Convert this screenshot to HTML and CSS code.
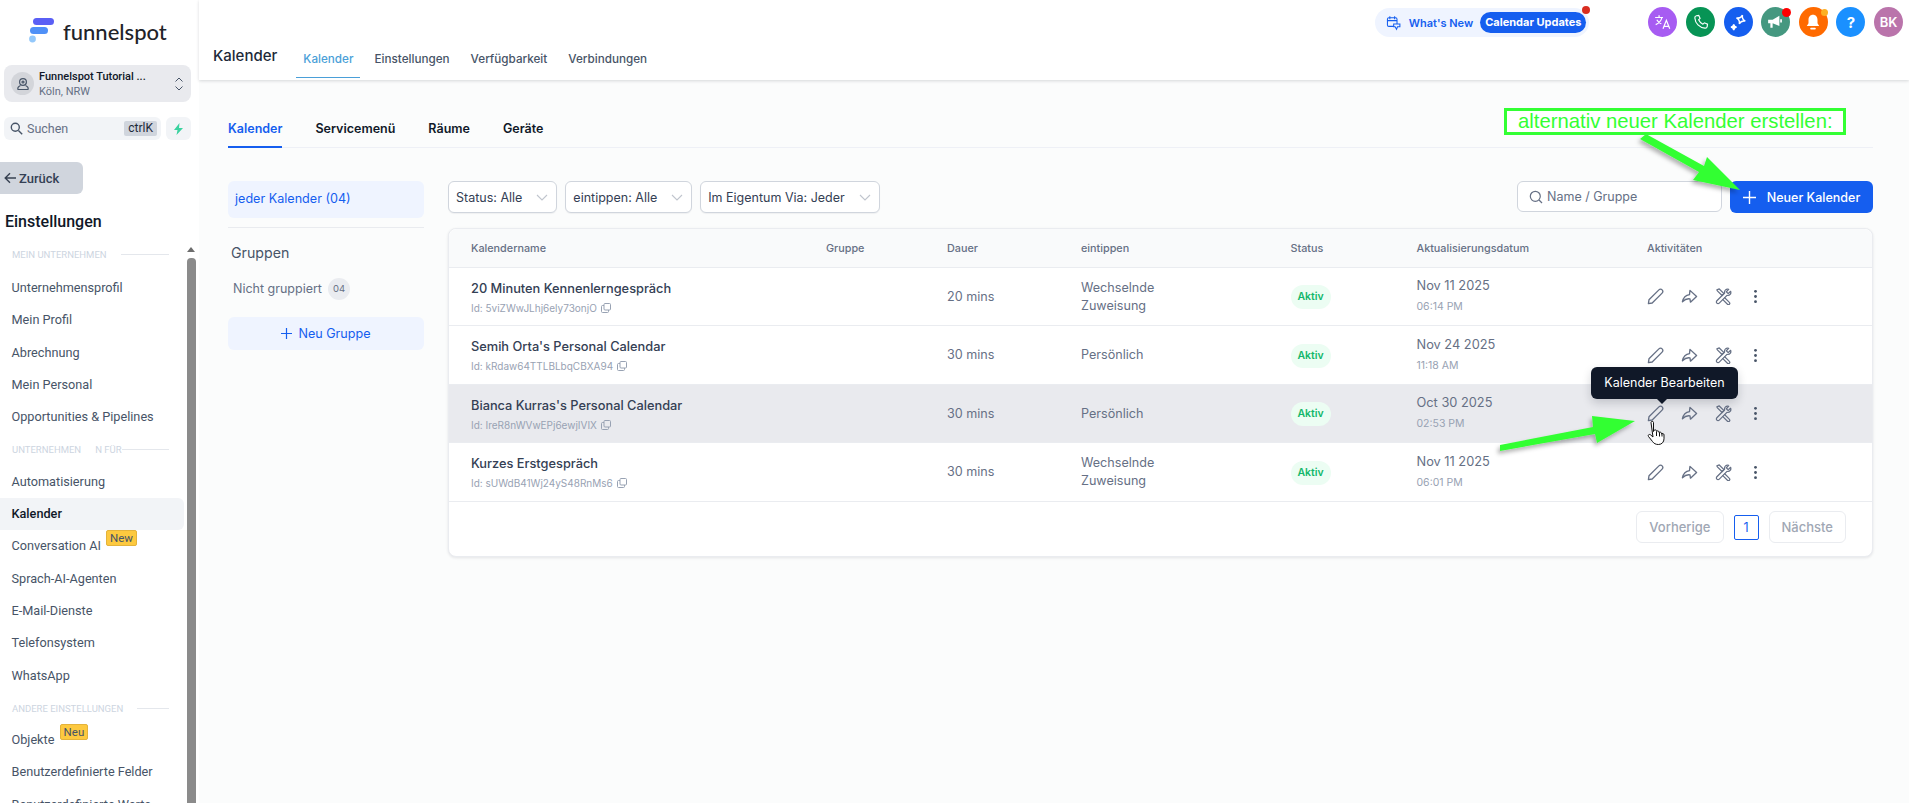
FILE: index.html
```html
<!DOCTYPE html>
<html lang="de">
<head>
<meta charset="utf-8">
<title>Kalender</title>
<link rel="stylesheet" href="styles.css">
</head>
<body>
<div class="app">
  <aside class="sidebar">
    <div class="logo">
      <svg class="logo-mark" width="28" height="26" viewBox="0 0 28 26"><rect x="4" y="0" width="21" height="7" rx="3.5" fill="#5a5ff5"/><rect x="1" y="9" width="18" height="7" rx="3.5" fill="#4f90f7"/><circle cx="3.5" cy="21" r="3.4" fill="#93c8fb"/></svg>
      <span class="logo-text">funnelspot</span>
    </div>
    <div class="loc">
      <span class="loc-ico"><svg width="14" height="14" viewBox="0 0 14 14" fill="none" stroke="#475467" stroke-width="1.2"><circle cx="7" cy="5" r="3.4"/><circle cx="7" cy="5" r="1"/><path d="M4.5 8.5 C2 9.5 1.5 11 2 12.5 H12 C12.5 11 12 9.5 9.5 8.5"/></svg></span>
      <span class="loc-txt"><b>Funnelspot Tutorial ...</b><i>Köln, NRW</i></span>
      <svg class="loc-sw" width="10" height="16" viewBox="0 0 10 16" fill="none" stroke="#475467" stroke-width="1"><path d="M1.5 5.5 5 2l3.5 3.5M1.5 10.5 5 14l3.5-3.5"/></svg>
    </div>
    <div class="searchrow">
      <div class="search">
        <svg width="13" height="13" viewBox="0 0 13 13" fill="none" stroke="#475467" stroke-width="1.4"><circle cx="5.3" cy="5.3" r="4"/><path d="m8.4 8.4 3.8 3.8"/></svg>
        <span class="search-l">Suchen</span><kbd class="kbd">ctrlK</kbd>
      </div>
      <div class="bolt"><svg width="11" height="12" viewBox="0 0 11 12"><path d="M6.5 0 1 7h3.5L3.5 12 10 5H6z" fill="#3ad29f"/></svg></div>
    </div>
    <button class="back"><svg width="13" height="12" viewBox="0 0 13 12" fill="none" stroke="#374151" stroke-width="1.4"><path d="M12 6H1.5M6 1.2 1.2 6 6 10.8"/></svg>Zurück</button>
    <h2 class="set-title">Einstellungen</h2>
    <div class="menuwrap">
      <nav class="menu">
        <div class="sec"><span>MEIN UNTERNEHMEN</span><em></em></div>
        <a class="mi">Unternehmensprofil</a>
        <a class="mi">Mein Profil</a>
        <a class="mi">Abrechnung</a>
        <a class="mi">Mein Personal</a>
        <a class="mi">Opportunities &amp; Pipelines</a>
        <div class="sec"><span>UNTERNEHMEN</span><span class="sec-f">N FÜR</span><em></em></div>
        <a class="mi">Automatisierung</a>
        <a class="mi on">Kalender</a>
        <a class="mi">Conversation AI <sup class="tag">New</sup></a>
        <a class="mi">Sprach-AI-Agenten</a>
        <a class="mi">E-Mail-Dienste</a>
        <a class="mi">Telefonsystem</a>
        <a class="mi">WhatsApp</a>
        <div class="sec"><span>ANDERE EINSTELLUNGEN</span><em></em></div>
        <a class="mi">Objekte <sup class="tag">Neu</sup></a>
        <a class="mi">Benutzerdefinierte Felder</a>
        <a class="mi">Benutzerdefinierte Werte</a>
      </nav>
      <div class="sbar"><i class="sbar-up"></i><i class="sbar-th"></i></div>
    </div>
  </aside>

  <main class="main">
    <header class="head">
      <div class="head-top">
        <div class="wn">
          <svg width="18" height="18" viewBox="0 0 16 16" fill="none" stroke="#155eef" stroke-width="1.1"><rect x="1.5" y="2.5" width="10" height="9" rx="1.5"/><path d="M1.5 5.5h10M4 1v3M9 1v3"/><path d="M8 9h6.5v3H12l-1 2.5L9.5 12H8z" fill="#eff4ff"/></svg>
          <span class="wn-t">What's New</span>
          <span class="wn-b">Calendar Updates</span>
          <i class="wn-dot"></i>
        </div>
        <div class="circles">
          <span class="cir c1"><svg width="18" height="16" viewBox="0 0 16 14" fill="none" stroke="#fff" stroke-width="1.1"><path d="M1 3h7M4.5 1v2M7 3c-.6 3-2.6 5-5.5 6.3M2.5 5c.8 1.6 2 2.8 4 3.6M8 13l3-7.5 3 7.5M9 10.8h4"/></svg></span>
          <span class="cir c2"><svg width="16" height="16" viewBox="0 0 14 14" fill="none" stroke="#fff" stroke-width="1"><path d="M3 1.5 5 1.2l1.2 2.7-1.3 1.2c.7 1.6 2 2.9 3.8 3.8L10 7.7l2.7 1.2-.3 2.1c-.2.9-1 1.5-2 1.4C5.6 12 2 8.300 1.600 3.500 1.500 2.500 2.100 1.700 3 1.500z"/></svg></span>
          <span class="cir c3"><svg width="19" height="19" viewBox="0 0 16 16" fill="none" stroke="#fff" stroke-width="1.2"><path d="M10 1.500c.3 2.300 1.700 3.700 4 4-2.300.3-3.700 1.700-4 4-.3-2.300-1.700-3.700-4-4 2.300-.3 3.700-1.700 4-4z" transform="rotate(20 10 5.500)"/><path d="M4 9.500c.2 1.300 1 2.100 2.400 2.400C5 12.100 4.200 13 4 14.400c-.2-1.400-1-2.300-2.400-2.500C3 11.600 3.800 10.800 4 9.500z" fill="#fff"/></svg></span>
          <span class="cir c4"><svg width="18" height="16" viewBox="0 0 16 14"><path d="M1 5h4l6-3.500v9L5 8v4H3V8H1z" fill="#fff"/><path d="M12.500 4.500v3" stroke="#fff" stroke-width="1.500"/></svg><i class="dot-r"></i></span>
          <span class="cir c5"><svg width="16" height="18" viewBox="0 0 14 16"><path d="M7 1.500c-2.500 0-4 2-4 4.500v3L1.500 11.500h11L11 9V6c0-2.500-1.500-4.500-4-4.500z" fill="#fff"/><rect x="4.500" y="13" width="5" height="1.600" rx=".8" fill="#fff"/></svg><i class="dot-y"></i></span>
          <span class="cir c6">?</span>
          <span class="cir c7">BK</span>
        </div>
      </div>
      <div class="head-bot">
        <h1 class="ttl">Kalender</h1>
        <nav class="tabs">
          <a class="tab act">Kalender</a><a class="tab">Einstellungen</a><a class="tab">Verfügbarkeit</a><a class="tab">Verbindungen</a>
        </nav>
      </div>
    </header>

    <div class="content">
      <nav class="stabs">
        <a class="stab act">Kalender</a><a class="stab">Servicemenü</a><a class="stab">Räume</a><a class="stab">Geräte</a>
      </nav>
      <div class="cols">
        <section class="groups">
          <div class="g-all">jeder Kalender (04)</div>
          <div class="g-sep"></div>
          <div class="g-h">Gruppen</div>
          <div class="g-item">Nicht gruppiert <span class="g-c">04</span></div>
          <button class="g-new"><svg width="11" height="11" viewBox="0 0 11 11" stroke="#155eef" stroke-width="1.2"><path d="M5.500 0v11M0 5.500h11"/></svg>Neu Gruppe</button>
        </section>
        <section class="list">
          <div class="bar">
            <div class="sel">Status: Alle<svg class="chev" width="12" height="7" viewBox="0 0 12 7" fill="none" stroke="#c0c5ce" stroke-width="1.1"><path d="m1 1 5 5 5-5"/></svg></div>
            <div class="sel">eintippen: Alle<svg class="chev" width="12" height="7" viewBox="0 0 12 7" fill="none" stroke="#c0c5ce" stroke-width="1.1"><path d="m1 1 5 5 5-5"/></svg></div>
            <div class="sel">Im Eigentum Via: Jeder<svg class="chev" width="12" height="7" viewBox="0 0 12 7" fill="none" stroke="#c0c5ce" stroke-width="1.1"><path d="m1 1 5 5 5-5"/></svg></div>
            <div class="spacer"></div>
            <div class="find"><svg width="14" height="14" viewBox="0 0 14 14" fill="none" stroke="#667085" stroke-width="1.2"><circle cx="6.300" cy="6.300" r="5"/><path d="m10 10 3 3"/></svg><span>Name / Gruppe</span></div>
            <button class="newbtn"><svg width="13" height="13" viewBox="0 0 13 13" stroke="#fff" stroke-width="1.400"><path d="M6.500 0v13M0 6.500h13"/></svg>Neuer Kalender</button>
          </div>
          <div class="card">
            <div class="row rh"><span>Kalendername</span><span>Gruppe</span><span>Dauer</span><span>eintippen</span><span>Status</span><span>Aktualisierungsdatum</span><span>Aktivitäten</span></div>

            <div class="row">
              <div><div class="nm">20 Minuten Kennenlerngespräch</div><div class="id">Id: 5viZWwJLhj6ely73onjO <svg class="cp" width="10" height="10" viewBox="0 0 10 10" fill="none" stroke="#98a2b3"><rect x="3" y=".5" width="6.500" height="6.500" rx="1"/><path d="M3 2.500H1.500a1 1 0 0 0-1 1v5a1 1 0 0 0 1 1h5a1 1 0 0 0 1-1V7"/></svg></div></div>
              <div></div><div class="tx">20 mins</div><div class="tx">Wechselnde<br>Zuweisung</div><div><span class="bdg">Aktiv</span></div>
              <div class="dt">Nov 11 2025<small>06:14 PM</small></div>
              <div class="acts"><svg class="ic"><use href="#i-pen"/></svg><svg class="ic"><use href="#i-share"/></svg><svg class="ic"><use href="#i-tool"/></svg><svg class="ic ic-d"><use href="#i-dots"/></svg></div>
            </div>
            <div class="row">
              <div><div class="nm">Semih Orta's Personal Calendar</div><div class="id">Id: kRdaw64TTLBLbqCBXA94 <svg class="cp" width="10" height="10" viewBox="0 0 10 10" fill="none" stroke="#98a2b3"><rect x="3" y=".5" width="6.500" height="6.500" rx="1"/><path d="M3 2.500H1.500a1 1 0 0 0-1 1v5a1 1 0 0 0 1 1h5a1 1 0 0 0 1-1V7"/></svg></div></div>
              <div></div><div class="tx">30 mins</div><div class="tx">Persönlich</div><div><span class="bdg">Aktiv</span></div>
              <div class="dt">Nov 24 2025<small>11:18 AM</small></div>
              <div class="acts"><svg class="ic"><use href="#i-pen"/></svg><svg class="ic"><use href="#i-share"/></svg><svg class="ic"><use href="#i-tool"/></svg><svg class="ic ic-d"><use href="#i-dots"/></svg></div>
            </div>
            <div class="row hov">
              <div><div class="nm">Bianca Kurras's Personal Calendar</div><div class="id">Id: IreR8nWVwEPj6ewjIVIX <svg class="cp" width="10" height="10" viewBox="0 0 10 10" fill="none" stroke="#98a2b3"><rect x="3" y=".5" width="6.500" height="6.500" rx="1"/><path d="M3 2.500H1.500a1 1 0 0 0-1 1v5a1 1 0 0 0 1 1h5a1 1 0 0 0 1-1V7"/></svg></div></div>
              <div></div><div class="tx">30 mins</div><div class="tx">Persönlich</div><div><span class="bdg">Aktiv</span></div>
              <div class="dt">Oct 30 2025<small>02:53 PM</small></div>
              <div class="acts"><svg class="ic"><use href="#i-pen"/></svg><svg class="ic"><use href="#i-share"/></svg><svg class="ic"><use href="#i-tool"/></svg><svg class="ic ic-d"><use href="#i-dots"/></svg>
                <div class="tip">Kalender Bearbeiten</div>
              </div>
            </div>
            <div class="row">
              <div><div class="nm">Kurzes Erstgespräch</div><div class="id">Id: sUWdB41Wj24yS48RnMs6 <svg class="cp" width="10" height="10" viewBox="0 0 10 10" fill="none" stroke="#98a2b3"><rect x="3" y=".5" width="6.500" height="6.500" rx="1"/><path d="M3 2.500H1.500a1 1 0 0 0-1 1v5a1 1 0 0 0 1 1h5a1 1 0 0 0 1-1V7"/></svg></div></div>
              <div></div><div class="tx">30 mins</div><div class="tx">Wechselnde<br>Zuweisung</div><div><span class="bdg">Aktiv</span></div>
              <div class="dt">Nov 11 2025<small>06:01 PM</small></div>
              <div class="acts"><svg class="ic"><use href="#i-pen"/></svg><svg class="ic"><use href="#i-share"/></svg><svg class="ic"><use href="#i-tool"/></svg><svg class="ic ic-d"><use href="#i-dots"/></svg></div>
            </div>
            <div class="pager">
              <button class="pg">Vorherige</button><span class="pn">1</span><button class="pg">Nächste</button>
            </div>
          </div>
        </section>
      </div>
    </div>
  </main>
</div>

<div class="note">alternativ neuer Kalender erstellen:</div>
<svg class="arrows" width="1909" height="803" viewBox="0 0 1909 803">
  <defs><filter id="sh" x="-20%" y="-20%" width="140%" height="140%"><feDropShadow dx="-2" dy="3" stdDeviation="2" flood-color="#000" flood-opacity=".3"/></filter></defs>
  <path filter="url(#sh)" fill="#33ff33" d="M1640 139 1646 134 1704 166 1707 157 1740 190 1693 180 1699 172Z"/>
  <path filter="url(#sh)" fill="#33ff33" d="M1500 445 1500 451 1595 434 1597 443 1635 421 1592 416 1593 427Z"/>
  <g stroke="#111" stroke-width="1" fill="#fff" stroke-linejoin="round"><path d="M1651 422.500c0-1.500 2.500-1.500 2.500 0v9l.6-1c.5-1 2.400-.8 2.400.5v.5c.3-1 2.500-.8 2.500.7v.5c.4-.9 2.500-.7 2.500.8v.5c.5-.8 2.500-.6 2.500.8v4c0 3-2 5.700-5.500 5.700-3 0-4.500-1-6-3l-4-5c-1-1.300.7-2.700 2-1.700l2.500 2.200z"/><path d="M1656.500 432v4M1659.500 432.500v4M1662 433v3.500" fill="none"/></g>
  <symbol id="i-pen" viewBox="0 0 18 18"><path fill="none" stroke="#667085" stroke-width="1.400" stroke-linejoin="round" d="M1.500 16.500l.6-4L12.600 2c1-1 2.500-1 3.400 0s1 2.400 0 3.400L5.500 15.900z"/></symbol>
  <symbol id="i-share" viewBox="0 0 18 18"><path fill="none" stroke="#667085" stroke-width="1.400" stroke-linejoin="round" d="M9.500 2.500 16.500 9 10 15 9.500 11.500C6.500 11 4 12 1.500 14.500 2.500 10 5.500 7.500 9 7z"/></symbol>
  <symbol id="i-tool" viewBox="0 0 18 18"><g fill="none" stroke="#667085" stroke-width="1.300" stroke-linejoin="round"><path d="M2 2 4.500 1l5 5-2 2-5-5zM10 10l5.200 5.200a1.400 1.400 0 0 1-2 2L8 12"/><path d="M16.500 3.500 14 6l-2-2 2.500-2.500c-2.500-1-5 1-4.300 3.800L2 13.500a1.700 1.700 0 0 0 2.500 2.500l8.200-8.200c2.800.7 4.800-1.800 3.800-4.300z"/></g></symbol>
  <symbol id="i-dots" viewBox="0 0 18 18"><g fill="#475467"><circle cx="9" cy="3.500" r="1.500"/><circle cx="9" cy="9" r="1.500"/><circle cx="9" cy="14.500" r="1.500"/></g></symbol>
</svg>
</body>
</html>
```

FILE: styles.css
```css
* { box-sizing: border-box; }
html, body { margin: 0; height: 803px; overflow: hidden; background: #fff; }
body { font-family: Inter, "Noto Sans", sans-serif; color: #344054; position: relative; }
button { font-family: inherit; cursor: pointer; }
.app { display: flex; height: 803px; }

/* sidebar */
.sidebar { width: 199px; flex: none; display: flex; flex-direction: column; background: #fff; font-family: Roboto, sans-serif; overflow: hidden; }
.logo { display: flex; align-items: flex-start; height: 65px; padding: 18px 0 0 29px; }
.logo-mark { flex: none; margin-right: 6px; }
.logo-text { font: 500 22px/1 Lato, sans-serif; color: #1f2329; margin-top: 3px; }
.loc { margin: 0 8px 0 4px; height: 37px; border-radius: 8px; background: #e9eaee; display: flex; align-items: center; padding: 0 7px; }
.loc-ico { width: 23px; height: 23px; border-radius: 50%; background: #d3d5da; display: flex; align-items: center; justify-content: center; flex: none; }
.loc-txt { flex: 1; margin-left: 5px; display: flex; flex-direction: column; font-size: 11px; line-height: 15px; }
.loc-txt b { font-weight: 500; color: #101828; }
.loc-txt i { font-style: normal; color: #667085; }
.searchrow { display: flex; gap: 5px; margin: 15px 8px 0 4px; height: 23px; }
.search { flex: 1; background: #f2f4f7; border-radius: 6px; display: flex; align-items: center; padding: 0 4px 0 6px; }
.search-l { flex: 1; font-size: 12.500px; color: #667085; margin-left: 4px; }
.kbd { font: 12px Roboto, sans-serif; background: #d0d5dd; color: #1d2939; border-radius: 2px; padding: 0 4px; height: 15px; line-height: 14px; }
.bolt { width: 25px; background: #f2f4f7; border-radius: 6px; display: flex; align-items: center; justify-content: center; }
.back { align-self: flex-start; margin-top: 22px; width: 83px; height: 32px; border: 0; border-radius: 0 6px 6px 0; background: #d0d5dd; display: flex; align-items: center; gap: 2px; padding: 0 0 0 4px; font: 500 13px Roboto, sans-serif; color: #344054; }
.set-title { margin: 18px 0 0 5px; font: 500 16px/20px Roboto, sans-serif; color: #101828; }
.menuwrap { flex: 1; display: flex; min-height: 0; margin-top: 13px; }
.menu { width: 184px; flex: none; overflow: hidden; }
.sec { height: 32.300px; padding: 0 15px 0 12px; display: flex; align-items: center; font-size: 9.500px; color: #cdd5df; white-space: nowrap; }
.sec:first-child { margin-top: -3px; height: 24px; margin-bottom: 6px; }
.sec em { flex: 1; height: 1px; background: #e4e7ec; margin-left: 14px; }
.sec-f { margin-left: 14px; }
.sec-f + em { margin-left: 0; }
.mi { display: block; height: 32.300px; line-height: 32.300px; padding-left: 11.500px; font-size: 12.700px; color: #475467; white-space: nowrap; }
.mi.on { background: #f2f4f7; color: #101828; font-weight: 500; border-radius: 0 6px 6px 0; }
.tag { display: inline-block; vertical-align: 8px; font-size: 11.500px; line-height: 14px; height: 16px; padding: 0 3px; background: #fdc93f; border: 1px solid #e4b33b; border-radius: 2px; color: #475467; margin-left: 2px; }
.sbar { width: 15px; flex: none; margin-left: 2px; position: relative; padding-top: 2px; display: flex; flex-direction: column; align-items: center; }
.sbar-up { width: 0; height: 0; border-left: 4.500px solid transparent; border-right: 4.500px solid transparent; border-bottom: 5px solid #6d6d6d; margin: 0 5px 0 0; }
.sbar-th { display: block; width: 9px; flex: 1; background: #8b8b8b; border-radius: 4px 4px 0 0; margin: 6px 5px 0 0; }

/* main */
.main { flex: 1; min-width: 0; background: #fbfcfc; display: flex; flex-direction: column; }
.head { height: 80px; background: #fff; box-shadow: 0 1px 3px rgba(16,24,40,.16); display: flex; flex-direction: column; }
.head-top { height: 41px; display: flex; align-items: flex-start; justify-content: flex-end; padding: 7px 0 0 0; }
.wn { position: relative; display: flex; align-items: center; height: 29px; width: 214px; margin-top: 1px; background: #eff4ff; border-radius: 15px; padding: 0 3px 0 11px; }
.wn-t { font-size: 11px; font-weight: 600; color: #155eef; margin: 0 7px 0 7px; white-space: nowrap; }
.wn-b { height: 21px; line-height: 21px; font-size: 11px; font-weight: 700; color: #fff; background: #155eef; border-radius: 11px; padding: 0 5px; white-space: nowrap; flex: 1; text-align: center; }
.wn-dot { position: absolute; right: -1px; top: -2px; width: 8px; height: 8px; background: #d92d20; border-radius: 50%; }
.circles { display: flex; gap: 8.600px; margin-left: 59px; padding-right: 6px; }
.cir { position: relative; width: 29px; height: 30px; border-radius: 50%; display: flex; align-items: center; justify-content: center; color: #fff; font-weight: 700; font-size: 13px; }
.c1 { background: #a75cf2; } .c2 { background: #079455; } .c3 { background: #155eef; }
.c4 { background: #459880; } .c5 { background: #ff6a00; } .c6 { background: #1a90ff; font-size: 15px; } .c7 { background: #ba74ab; font-weight: 600; font-size: 13px; }
.dot-r { position: absolute; right: -1px; top: 1px; width: 9px; height: 9px; border-radius: 50%; background: #f00; }
.dot-y { position: absolute; right: 0; top: 2px; width: 7px; height: 7px; border-radius: 50%; background: #fdb022; }
.head-bot { display: flex; align-items: flex-start; padding-left: 14px; flex: 1; }
.ttl { margin: 5px 19px 0 0; font-size: 15px; line-height: 20px; font-weight: 500; color: #1d2939; }
.tabs { display: flex; gap: 7px; }
.tab { height: 37px; padding: 9px 7px 0; font-size: 11.700px; line-height: 18px; font-weight: 500; color: #475467; white-space: nowrap; }
.tab.act { color: #4a9fd8; border-bottom: 1px solid #4a9fd8; }

.content { flex: 1; min-height: 0; padding: 38px 36px 0 29px; }
.stabs { display: flex; gap: 33px; height: 30px; border-bottom: 1px solid #eef0f6; }
.stab { font-size: 12.500px; line-height: 20px; padding-top: 1px; font-weight: 600; color: #101828; height: 30px; white-space: nowrap; }
.stab.act { color: #155eef; border-bottom: 2px solid #155eef; }
.cols { display: flex; gap: 24px; margin-top: 33px; }
.groups { width: 196px; flex: none; }
.g-all { height: 37px; line-height: 36px; padding-left: 7px; background: #eff4ff; border-radius: 6px; font-size: 12.600px; color: #155eef; }
.g-sep { height: 1px; background: #e9ebef; margin-top: 9px; }
.g-h { margin: 15px 0 0 3px; font-size: 14.200px; line-height: 20px; color: #475467; font-weight: 400; }
.g-item { margin: 15px 0 0 5px; height: 22px; font-size: 12.500px; line-height: 16px; color: #667085; display: flex; align-items: center; gap: 6px; }
.g-c { width: 22px; height: 22px; border-radius: 50%; background: #eaecf0; font-size: 9.500px; text-align: center; line-height: 22px; }
.g-new { display: flex; align-items: center; justify-content: center; gap: 6px; width: 100%; height: 33px; margin-top: 16.500px; border: 0; border-radius: 6px; background: #eff4ff; color: #155eef; font-size: 12.600px; }

.list { flex: 1; min-width: 0; }
.bar { display: flex; gap: 8px; height: 32px; align-items: flex-start; }
.sel { height: 32px; padding: 0 8px 0 7px; display: flex; align-items: center; gap: 14px; border: 1px solid #d0d5dd; border-radius: 6px; background: #fff; font-size: 12.500px; color: #344054; white-space: nowrap; box-shadow: 0 1px 1px rgba(16,24,40,.05); }
.spacer { flex: 1; }
.find { width: 205px; height: 31px; display: flex; align-items: center; gap: 4px; padding-left: 11px; border: 1px solid #d0d5dd; border-radius: 6px; background: #fff; font-size: 12.500px; color: #667085; }
.newbtn { width: 143px; height: 32px; display: flex; align-items: center; justify-content: center; gap: 11px; border: 0; border-radius: 6px; background: #155eef; color: #fff; font-size: 12.500px; font-weight: 500; }
.card { margin-top: 15px; background: #fff; border: 1px solid #eaecf0; border-radius: 8px; box-shadow: 0 1px 3px rgba(16,24,40,.1); }
.row { display: grid; grid-template-columns: 355px 121px 134px 209.500px 126px 230.500px 1fr; align-items: center; height: 59px; padding-left: 22px; border-top: 1px solid #eaecf0; margin-top: -.4px; }
.rh { height: 38px; border-top: 0; background: #f9fafb; border-radius: 8px 8px 0 0; font-size: 10.800px; font-weight: 500; color: #667085; margin-top: 0; }
.row.hov { background: #e9eaee; }
.nm { font-size: 12.800px; line-height: 18px; font-weight: 500; color: #344054; white-space: nowrap; padding-top: 1px; }
.id { font-size: 10px; line-height: 14px; margin-top: 3px; color: #98a2b3; white-space: nowrap; }
.cp { vertical-align: -1px; margin-left: 1px; }
.tx { font-size: 12.600px; line-height: 18px; color: #667085; }
.bdg { display: inline-block; width: 40px; height: 24px; line-height: 24px; text-align: center; border-radius: 12px; background: #ecfdf3; color: #12b76a; font-size: 10.500px; font-weight: 600; }
.dt { font-size: 12.800px; line-height: 16px; color: #667085; font-weight: 400; }
.dt small { display: block; font-size: 10.500px; line-height: 16px; margin-top: 5px; font-weight: 400; color: #98a2b3; }
.acts { position: relative; display: flex; gap: 17px; padding-left: 0; align-items: center; }
.ic { width: 17px; height: 17px; flex: none; }
.ic-d { margin-left: -2px; }
.tip { position: absolute; left: -56px; top: -38px; width: 147px; height: 32px; line-height: 32px; text-align: center; background: #101828; color: #fff; font-size: 12.500px; border-radius: 6px; box-shadow: 0 4px 10px rgba(16,24,40,.18); }
.tip::after { content: ""; position: absolute; left: 66px; bottom: -5px; border: 5px solid transparent; border-top-color: #101828; border-bottom: 0; }
.pager { display: flex; justify-content: flex-end; align-items: center; gap: 10px; height: 55px; padding: 0 26px 4px 0; border-top: 1px solid #eaecf0; }
.pg { height: 32px; padding: 0 12px; background: #fff; border: 1px solid #eaecf0; border-radius: 6px; font-size: 13px; font-weight: 500; color: #a0a7b4; }
.pn { width: 25px; height: 25px; line-height: 23px; text-align: center; border: 1px solid #155eef; border-radius: 2px; font-size: 12.500px; color: #155eef; }

/* annotation overlay */
.note { position: absolute; left: 1504px; top: 108px; width: 342px; height: 27px; border: 3px solid #33ff33; background: #fff; color: #33ff33; font: 20.300px/21px "Liberation Sans", sans-serif; padding-left: 11px; white-space: nowrap; }
.arrows { position: absolute; left: 0; top: 0; pointer-events: none; }
```
